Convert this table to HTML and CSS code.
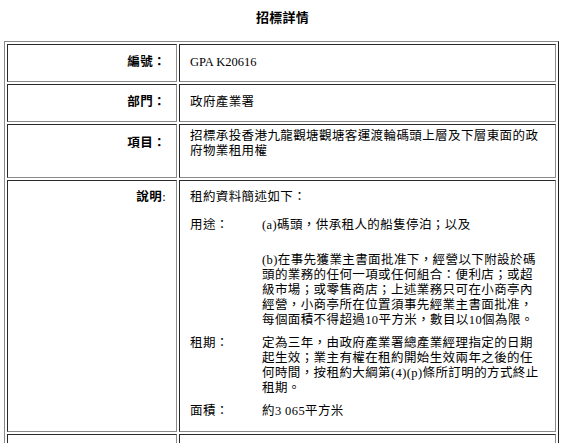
FILE: index.html
```html
<!DOCTYPE html>
<html lang="zh-Hant">
<head>
<meta charset="utf-8">
<title>招標詳情</title>
<link rel="stylesheet" href="styles.css">
</head>
<body>
<h1 class="title">招標詳情</h1>
<table class="detail">
  <colgroup><col class="col-label"><col class="col-value"></colgroup>
  <tr class="row-single">
    <th>編號：</th>
    <td class="latin">GPA K20616</td>
  </tr>
  <tr class="row-single">
    <th>部門：</th>
    <td>政府產業署</td>
  </tr>
  <tr class="row-item">
    <th>項目：</th>
    <td>招標承投香港九龍觀塘觀塘客運渡輪碼頭上層及下層東面的政府物業租用權</td>
  </tr>
  <tr class="row-desc">
    <th>說明<span class="thin">:</span></th>
    <td>
      <p class="intro">租約資料簡述如下：</p>
      <table class="terms">
        <colgroup><col class="term-label"><col class="term-value"></colgroup>
        <tr>
          <td>用途：</td>
          <td>
            <p class="para-a">(a)碼頭，供承租人的船隻停泊；以及</p>
            <p class="para-b">(b)在事先獲業主書面批准下，經營以下附設於碼頭的業務的任何一項或任何組合：便利店；或超級市場；或零售商店；上述業務只可在小商亭內經營，小商亭所在位置須事先經業主書面批准，每個面積不得超過10平方米，數目以10個為限。</p>
          </td>
        </tr>
        <tr class="term-next">
          <td>租期：</td>
          <td>定為三年，由政府產業署總產業經理指定的日期起生效；業主有權在租約開始生效兩年之後的任何時間，按租約大綱第(4)(p)條所訂明的方式終止租期。</td>
        </tr>
        <tr class="term-next">
          <td>面積：</td>
          <td>約3 065平方米</td>
        </tr>
      </table>
    </td>
  </tr>
  <tr class="row-more">
    <th></th>
    <td></td>
  </tr>
</table>
</body>
</html>
```
FILE: styles.css
```css
* {
  box-sizing: border-box;
}

body {
  margin: 0;
  background: #ffffff;
  color: #000000;
  font-family: "Liberation Serif", "Noto Sans CJK TC", serif;
  font-size: 12.5px;
  line-height: 15px;
  letter-spacing: 0.4px;
}

.title {
  margin: 0;
  height: 41px;
  padding-top: 10px;
  text-align: center;
  font-size: 13px;
  line-height: 15px;
  font-weight: bold;
  letter-spacing: 0.3px;
}

.detail {
  margin-left: 4px;
  width: 555px;
  table-layout: fixed;
  border-collapse: separate;
  border-spacing: 2px;
  border: 1px solid;
  border-color: #8a8a8a #222222 #222222 #8a8a8a;
}

.col-label {
  width: 170px;
}

.detail > tbody > tr > th,
.detail > tbody > tr > td {
  border: 1px solid;
  border-color: #2a2a2a #8a8a8a #8a8a8a #2a2a2a;
  vertical-align: top;
  padding: 10px 10px 11px 10px;
  font-weight: normal;
  text-align: left;
}

.detail > tbody > tr > th {
  text-align: right;
  font-weight: bold;
  padding-right: 10px;
}

.latin {
  letter-spacing: 0;
}

.thin {
  font-weight: normal;
}

.row-item > td {
  padding-top: 4px !important;
  padding-bottom: 18px !important;
}

.row-item > th {
  padding-top: 11px !important;
  padding-bottom: 11px !important;
}

.row-desc > th,
.row-desc > td {
  padding-top: 9px !important;
  padding-bottom: 12px !important;
}

.row-more > th,
.row-more > td {
  height: 30px;
}

.intro {
  margin: 0 0 13px 0;
}

.terms {
  width: 352px;
  table-layout: fixed;
  border-collapse: collapse;
  border-spacing: 0;
}

.term-label {
  width: 72px;
}

.term-value {
  width: 280px;
}

.terms td {
  padding: 0;
  vertical-align: top;
  text-align: left;
}

.term-next td {
  padding-top: 8px;
}

.para-a {
  margin: 0 0 20px 0;
}

.para-b {
  margin: 0;
}
```
